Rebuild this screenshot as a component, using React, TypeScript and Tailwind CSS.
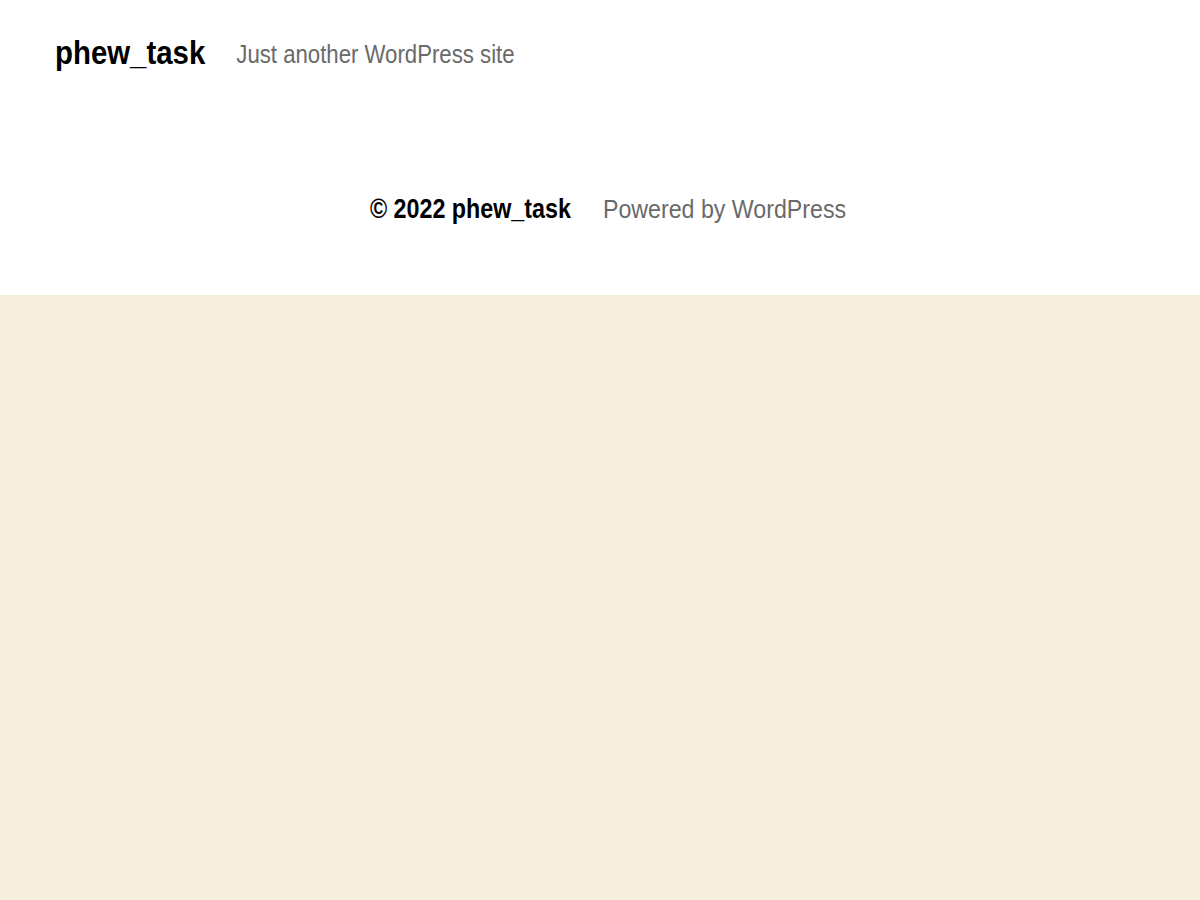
export default function App() {
  return (
    <div className="min-h-[900px] bg-[#f5eedf] font-['Liberation_Sans',Arial,sans-serif]">
      {/* header + footer on white */}
      <div className="bg-white h-[295px] flex flex-col">
        <header className="flex items-baseline gap-[31px] pl-[55px] pt-[37px]">
          <span className="text-[29.4px] leading-[29px] font-bold text-black scale-y-[1.15]">
            phew_task
          </span>
          <span className="text-[22.2px] leading-[22px] text-[#6a6a6a] scale-y-[1.15]">
            Just another WordPress site
          </span>
        </header>

        <footer className="flex items-baseline justify-center gap-[32px] pt-[132px] pl-[16px]">
          <span className="text-[23.3px] leading-[23px] font-bold text-black scale-y-[1.15]">
            © 2022 phew_task
          </span>
          <span className="text-[23.2px] leading-[23px] text-[#6a6a6a] scale-y-[1.15]">
            Powered by WordPress
          </span>
        </footer>
      </div>
    </div>
  )
}
